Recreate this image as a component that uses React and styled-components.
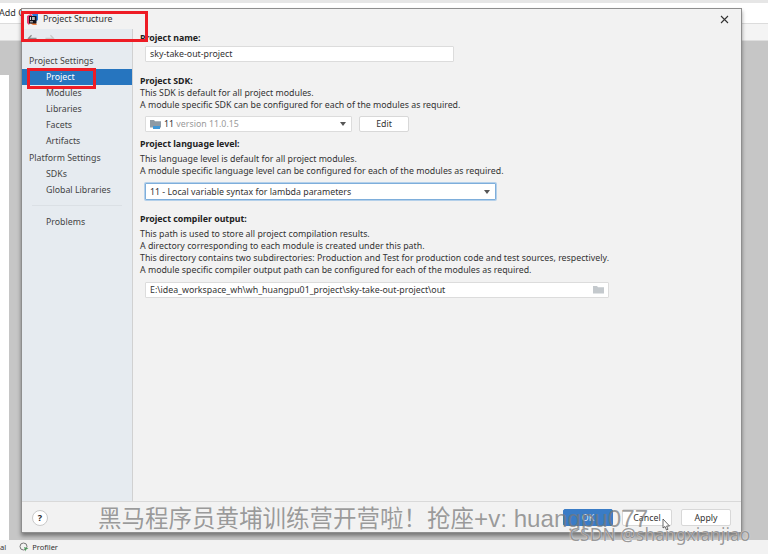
import React from "react";
import styled, { createGlobalStyle } from "styled-components";

const Global = createGlobalStyle`
  html, body { margin: 0; padding: 0; }
  body {
    width: 768px;
    height: 554px;
    overflow: hidden;
    font-family: "Noto Sans", "Noto Sans CJK SC", sans-serif;
    color: #2b2b2b;
  }
`;

const Screen = styled.div`
  position: relative;
  width: 768px;
  height: 554px;
  overflow: hidden;
  display: flex;
  flex-direction: column;
  background: #c6c6c6;
`;

const IdeTop = styled.div`
  height: 41px;
  flex: none;
  background: #f4f4f4;
  border-bottom: 1px solid #dedede;
  box-sizing: border-box;
`;

const TabStrip = styled.div`
  height: 24px;
  box-sizing: border-box;
  background: #fff;
  border-top: 3px solid #e6e6e6;
  border-bottom: 1px solid #dcdcdc;
  font-size: 9px;
  line-height: 20px;
  text-indent: -1px;
  color: #333;
`;

const IdeMiddle = styled.div`
  flex: 1;
  display: flex;
`;

const EditorStrip = styled.div`
  width: 9px;
  margin-top: 34px;
  background: #fff;
`;

const IdeStatus = styled.div`
  height: 14px;
  flex: none;
  background: #f2f2f2;
  display: flex;
  align-items: center;
  gap: 13px;
  font-size: 7.5px;
  color: #333;
`;

const StatusItem = styled.span`
  display: flex;
  align-items: center;
  gap: 3px;
`;

const Dialog = styled.div`
  position: absolute;
  left: 21px;
  top: 8px;
  width: 721px;
  height: 525px;
  box-sizing: border-box;
  background: #f2f2f2;
  border: 1px solid #8e8e8e;
  box-shadow: 0 3px 4px rgba(0, 0, 0, 0.4);
  display: flex;
  flex-direction: column;
`;

const TitleBar = styled.div`
  height: 20px;
  flex: none;
  display: flex;
  align-items: center;
  gap: 5px;
  padding: 0 12px 0 5px;
  font-size: 8.8px;
  color: #333;
`;

const TitleText = styled.span`
  flex: 1;
`;

const Body = styled.div`
  flex: 1;
  display: flex;
  min-height: 0;
`;

const Sidebar = styled.div`
  width: 110px;
  flex: none;
  background: #e6ebf0;
  border-right: 1px solid #d1d1d1;
  display: flex;
  flex-direction: column;
`;

const NavArrows = styled.div`
  height: 24px;
  box-sizing: border-box;
  display: flex;
  align-items: flex-start;
  gap: 8px;
  padding: 5px 0 0 5px;
`;

const SideHeader = styled.div`
  height: 16px;
  line-height: 16px;
  margin-top: ${(p) => p.$top || 0}px;
  padding-left: 7px;
  font-size: 8.8px;
  color: #444;
`;

const SideItem = styled.div`
  height: 16px;
  line-height: 16px;
  padding-left: 24px;
  font-size: 8.8px;
  color: ${(p) => (p.$active ? "#fff" : "#444")};
  background: ${(p) => (p.$active ? "#2675bf" : "transparent")};
`;

const SideRule = styled.div`
  height: 1px;
  margin: 7px 10px 8px;
  background: #dbe0e5;
`;

const Content = styled.div`
  flex: 1;
  padding: 3px 0 0 7px;
  font-size: 8.8px;
  line-height: 12px;
`;

const Label = styled.div`
  font-weight: 700;
  color: #222;
  margin-top: ${(p) => p.$top || 0}px;
`;

const Hint = styled.div`
  color: #333;
  margin-top: ${(p) => p.$top || 0}px;
`;

const Field = styled.div`
  box-sizing: border-box;
  width: ${(p) => p.$w}px;
  height: ${(p) => (p.$focus ? 17 : 16)}px;
  margin: ${(p) => p.$top || 0}px 0 0 5px;
  padding: 0 4px;
  display: flex;
  align-items: center;
  gap: 3px;
  background: #fff;
  border: 1px solid ${(p) => (p.$focus ? "#7eaedb" : "#dcdcdc")};
  box-shadow: ${(p) => (p.$focus ? "0 0 0 1px #b4d0ea" : "none")};
  border-radius: 1px;
  color: #333;
`;

const FieldText = styled.span`
  flex: 1;
  white-space: nowrap;
`;

const Muted = styled.span`
  color: #9a9a9a;
`;

const Row = styled.div`
  display: flex;
  align-items: flex-start;
  gap: 7px;
  margin-top: 5px;
`;

const Caret = styled.span`
  width: 0;
  height: 0;
  border-left: 3.5px solid transparent;
  border-right: 3.5px solid transparent;
  border-top: 4px solid #555;
  margin-right: 1px;
`;

const Button = styled.div`
  box-sizing: border-box;
  width: 50px;
  height: 17px;
  flex: none;
  display: flex;
  align-items: center;
  justify-content: center;
  background: ${(p) => (p.$primary ? "#3a7cc6" : "#fff")};
  border: 1px solid ${(p) => (p.$primary ? "#3a7cc6" : "#d8d8d8")};
  border-radius: 2px;
  color: ${(p) => (p.$primary ? "#dfe9f4" : "#333")};
  font-size: 8.8px;
`;

const EditButton = styled(Button)`
  height: 16px;
`;

const Footer = styled.div`
  height: 31px;
  flex: none;
  box-sizing: border-box;
  border-top: 1px solid #d9d9d9;
  display: flex;
  align-items: center;
  gap: 9px;
  padding: 1px 10px 0 10px;
`;

const Help = styled.div`
  width: 16px;
  height: 16px;
  box-sizing: border-box;
  border-radius: 50%;
  background: #fff;
  border: 1px solid #c9c9c9;
  display: flex;
  align-items: center;
  justify-content: center;
  font-size: 9px;
  font-weight: 700;
  margin-right: auto;
`;

const RedBox = styled.div`
  position: absolute;
  left: ${(p) => p.$x}px;
  top: ${(p) => p.$y}px;
  width: ${(p) => p.$w}px;
  height: ${(p) => p.$h}px;
  box-sizing: border-box;
  border: 3px solid #ee1c25;
`;

const Banner = styled.div`
  position: absolute;
  left: 98px;
  top: 505px;
  white-space: nowrap;
  font-family: "Liberation Sans", "Noto Sans CJK SC", sans-serif;
  font-size: 23.5px;
  line-height: 28px;
  color: rgba(120, 120, 120, 0.72);
`;

const BannerLatin = styled.span`
  font-size: 24.2px;
`;

const Watermark = styled.div`
  position: absolute;
  left: 569px;
  top: 523px;
  white-space: nowrap;
  font-size: 17.5px;
  line-height: 22px;
  color: rgba(110, 110, 110, 0.7);
  text-shadow: 0 0 1px #fff;
`;

const Pointer = styled.svg`
  position: absolute;
  left: 662px;
  top: 518px;
`;

const ArrowIcon = ({ flip, color }) => (
  <svg width="10" height="9" viewBox="0 0 11 9" style={flip ? { transform: "scaleX(-1)" } : undefined}>
    <path d="M10.5 4.5H1.5M5 1L1.5 4.5L5 8" fill="none" stroke={color} strokeWidth="1.4" />
  </svg>
);

const AppLogo = () => (
  <svg width="11" height="11" viewBox="0 0 11 11">
    <path d="M0 2L4 0L6 3L2 11L0 9Z" fill="#e8336e" />
    <path d="M5 0H11V6L8 8Z" fill="#2a7de1" />
    <path d="M1 8L6 11H10L6 5Z" fill="#f27d3a" />
    <rect x="2" y="2" width="7.5" height="7.5" fill="#14141c" />
    <rect x="3" y="7.4" width="3" height="0.9" fill="#eee" />
    <rect x="3" y="3" width="1" height="3" fill="#ddd" />
    <rect x="5" y="3" width="2.8" height="3" fill="#bbb" />
  </svg>
);

const CloseIcon = () => (
  <svg width="9" height="9" viewBox="0 0 9 9">
    <path d="M1 1L8 8M8 1L1 8" stroke="#333" strokeWidth="1.1" fill="none" />
  </svg>
);

const FolderIcon = ({ sdk }) => (
  <svg width="11" height="10" viewBox="0 0 11 10">
    <path d="M0 1H4L5 2.2H11V8.5H0Z" fill={sdk ? "#8d9aa5" : "#c4c9cd"} />
    {sdk && <rect x="3" y="7" width="7" height="3" fill="#3f98d8" />}
  </svg>
);

const ProfilerIcon = () => (
  <svg width="10" height="10" viewBox="0 0 10 10">
    <circle cx="4.5" cy="4.5" r="3.5" fill="none" stroke="#777" strokeWidth="1" />
    <path d="M5 5L9.5 6.5L7 7.5L6.5 9.5Z" fill="#4c9a5b" />
  </svg>
);

export default function App() {
  return (
    <>
      <Global />
      <Screen>
        <IdeTop>
          <TabStrip>Add C</TabStrip>
        </IdeTop>
        <IdeMiddle>
          <EditorStrip />
        </IdeMiddle>
        <IdeStatus>
          <span>al</span>
          <StatusItem>
            <ProfilerIcon />
            Profiler
          </StatusItem>
        </IdeStatus>

        <Dialog>
          <TitleBar>
            <AppLogo />
            <TitleText>Project Structure</TitleText>
            <CloseIcon />
          </TitleBar>
          <Body>
            <Sidebar>
              <NavArrows>
                <ArrowIcon color="#8c8c8c" />
                <ArrowIcon flip color="#c8c8c8" />
              </NavArrows>
              <SideHeader>Project Settings</SideHeader>
              <SideItem $active>Project</SideItem>
              <SideItem>Modules</SideItem>
              <SideItem>Libraries</SideItem>
              <SideItem>Facets</SideItem>
              <SideItem>Artifacts</SideItem>
              <SideHeader $top={1}>Platform Settings</SideHeader>
              <SideItem>SDKs</SideItem>
              <SideItem>Global Libraries</SideItem>
              <SideRule />
              <SideItem>Problems</SideItem>
            </Sidebar>
            <Content>
              <Label>Project name:</Label>
              <Field $w={309} $top={2}>
                <FieldText>sky-take-out-project</FieldText>
              </Field>
              <Label $top={13}>Project SDK:</Label>
              <Hint>This SDK is default for all project modules.</Hint>
              <Hint>A module specific SDK can be configured for each of the modules as required.</Hint>
              <Row>
                <Field $w={207}>
                  <FolderIcon sdk />
                  <FieldText>
                    11 <Muted>version 11.0.15</Muted>
                  </FieldText>
                  <Caret />
                </Field>
                <EditButton>Edit</EditButton>
              </Row>
              <Label $top={6}>Project language level:</Label>
              <Hint $top={3}>This language level is default for all project modules.</Hint>
              <Hint>A module specific language level can be configured for each of the modules as required.</Hint>
              <Field $w={351} $top={6} $focus>
                <FieldText>11 - Local variable syntax for lambda parameters</FieldText>
                <Caret />
              </Field>
              <Label $top={13}>Project compiler output:</Label>
              <Hint $top={3}>This path is used to store all project compilation results.</Hint>
              <Hint>A directory corresponding to each module is created under this path.</Hint>
              <Hint>This directory contains two subdirectories: Production and Test for production code and test sources, respectively.</Hint>
              <Hint>A module specific compiler output path can be configured for each of the modules as required.</Hint>
              <Field $w={464} $top={6}>
                <FieldText>E:\idea_workspace_wh\wh_huangpu01_project\sky-take-out-project\out</FieldText>
                <FolderIcon />
              </Field>
            </Content>
          </Body>
          <Footer>
            <Help>?</Help>
            <Button $primary>OK</Button>
            <Button>Cancel</Button>
            <Button>Apply</Button>
          </Footer>
        </Dialog>

        <RedBox $x={21} $y={11} $w={127} $h={31} />
        <RedBox $x={27} $y={68} $w={69} $h={21} />
        <Banner>
          黑马程序员黄埔训练营开营啦！抢座<BannerLatin>+v: huangpu077</BannerLatin>
        </Banner>
        <Watermark>CSDN @shangxianjiao</Watermark>
        <Pointer width="9" height="13" viewBox="0 0 9 13">
          <path d="M1 1V10L3 8.5L4.5 12L6 11.3L4.6 8H7.5Z" fill="#fff" stroke="#444" strokeWidth="0.8" />
        </Pointer>
      </Screen>
    </>
  );
}
